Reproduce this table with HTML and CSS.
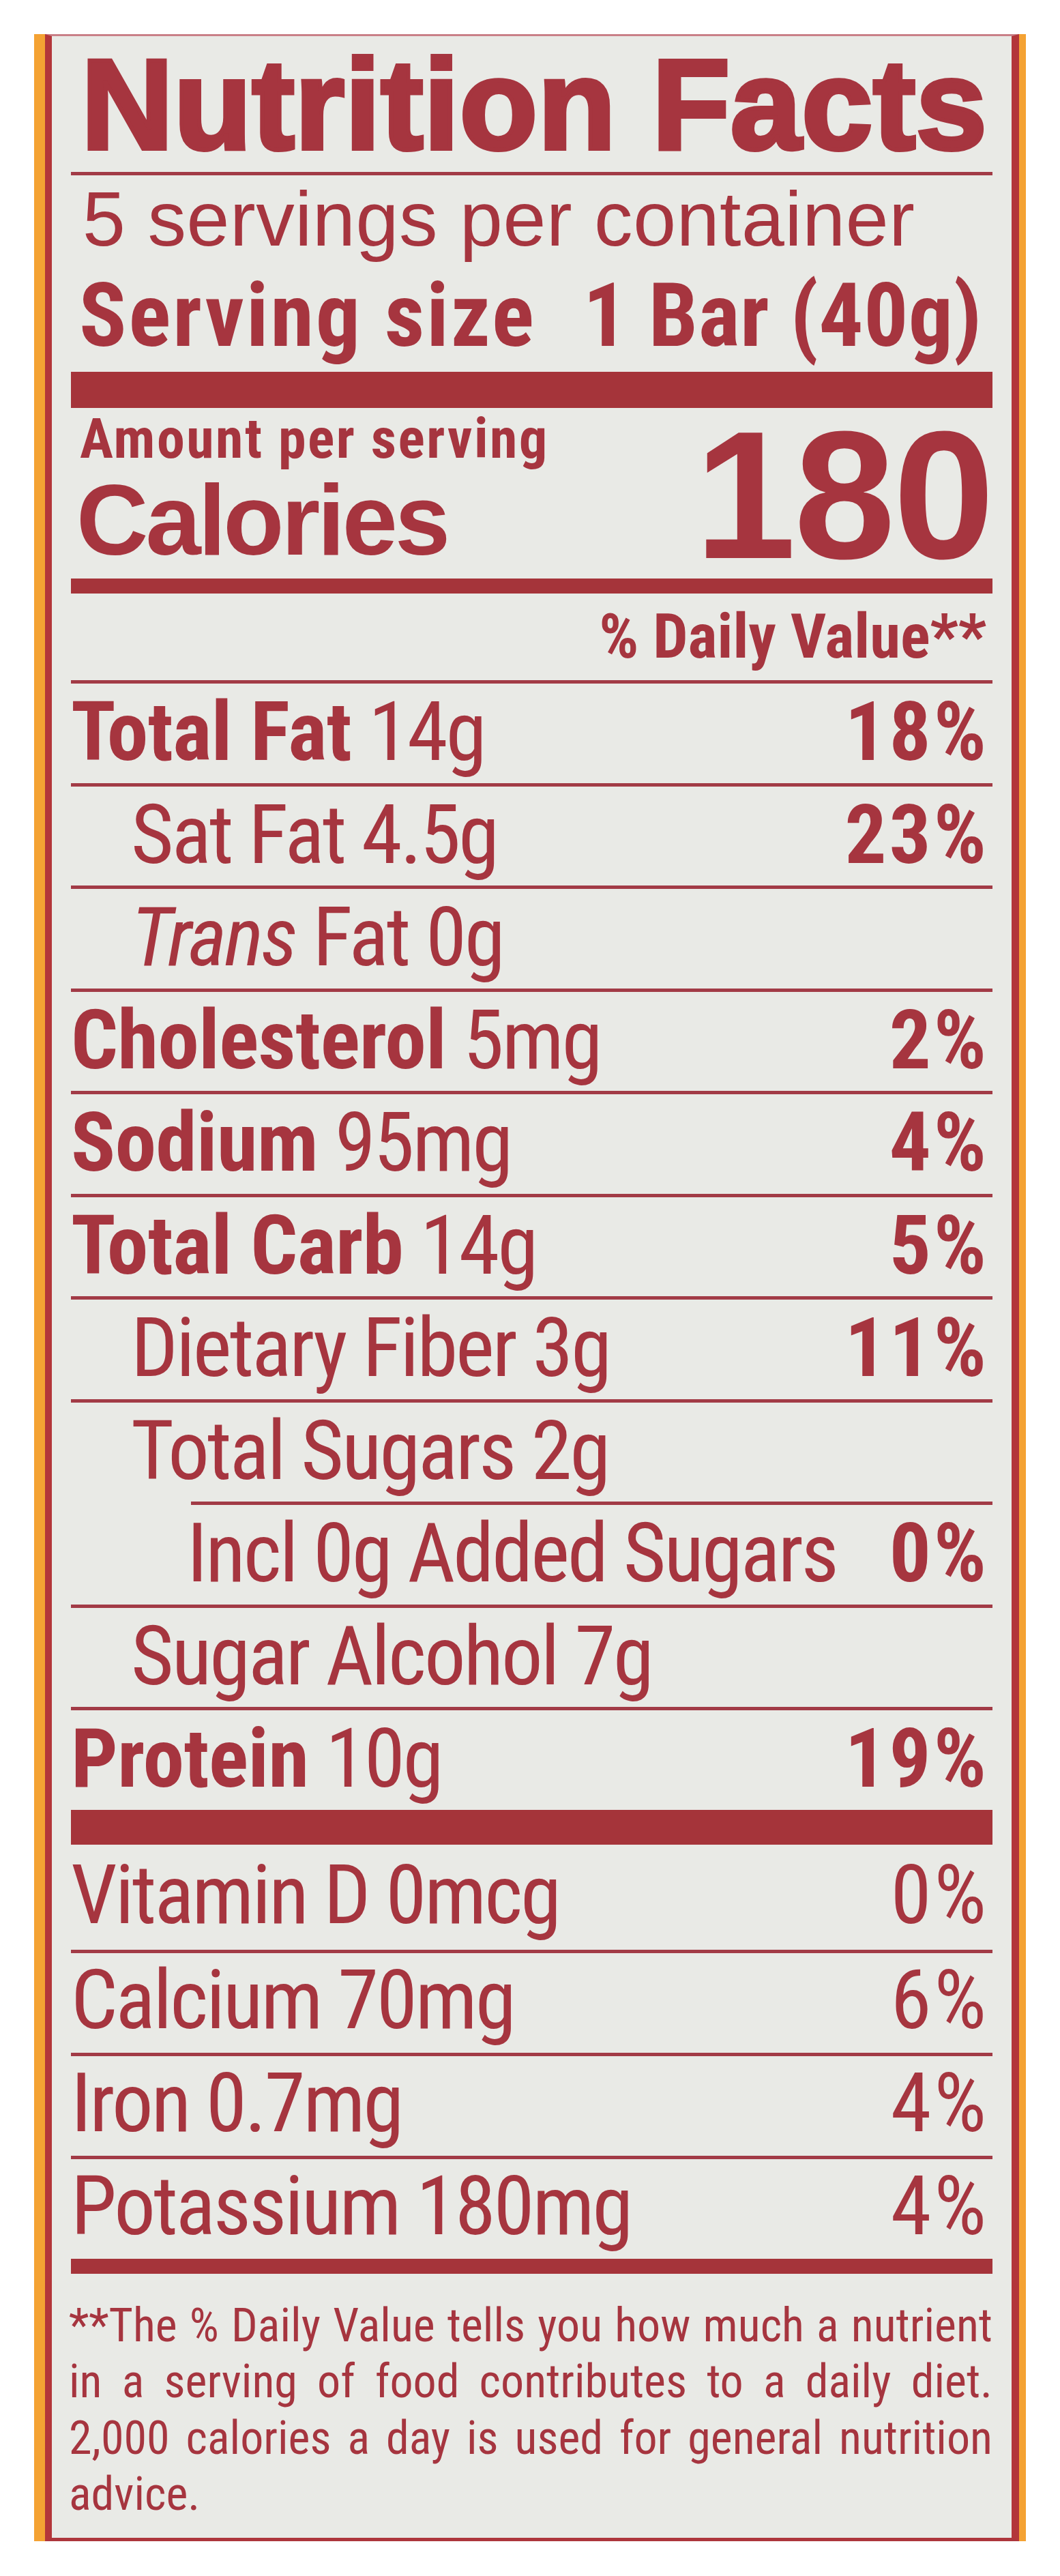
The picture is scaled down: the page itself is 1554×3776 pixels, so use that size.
FILE: index.html
```html
<!DOCTYPE html>
<html lang="en">
<head>
<meta charset="utf-8">
<title>Nutrition Facts</title>
<link rel="stylesheet" href="styles.css">
</head>
<body>
<div class="frame">
  <section class="label">
    <h1 class="title">Nutrition Facts</h1>
    <div class="rule"></div>
    <p class="servings">5 servings per container</p>
    <p class="size"><span class="size-label">Serving size</span><span class="size-value">1 Bar (40g)</span></p>
    <div class="bar bar-thick"></div>
    <div class="calories">
      <div class="cal-text">
        <div class="amount">Amount per serving</div>
        <div class="cal-label">Calories</div>
      </div>
      <div class="cal-value">180</div>
    </div>
    <div class="bar bar-medium"></div>
    <div class="dv-head">% Daily Value**</div>
    <div class="rule"></div>
    <div class="row"><span class="name"><b>Total Fat</b> 14g</span><b class="pct">18%</b></div>
    <div class="rule"></div>
    <div class="row sub"><span class="name">Sat Fat 4.5g</span><b class="pct">23%</b></div>
    <div class="rule"></div>
    <div class="row sub"><span class="name"><i>Trans</i> Fat 0g</span></div>
    <div class="rule"></div>
    <div class="row"><span class="name"><b>Cholesterol</b> 5mg</span><b class="pct">2%</b></div>
    <div class="rule"></div>
    <div class="row"><span class="name"><b>Sodium</b> 95mg</span><b class="pct">4%</b></div>
    <div class="rule"></div>
    <div class="row"><span class="name"><b>Total Carb</b> 14g</span><b class="pct">5%</b></div>
    <div class="rule"></div>
    <div class="row sub"><span class="name">Dietary Fiber 3g</span><b class="pct">11%</b></div>
    <div class="rule"></div>
    <div class="row sub"><span class="name">Total Sugars 2g</span></div>
    <div class="rule rule-sub2"></div>
    <div class="row sub2"><span class="name">Incl 0g Added Sugars</span><b class="pct">0%</b></div>
    <div class="rule"></div>
    <div class="row sub"><span class="name">Sugar Alcohol 7g</span></div>
    <div class="rule"></div>
    <div class="row"><span class="name"><b>Protein</b> 10g</span><b class="pct">19%</b></div>
    <div class="bar bar-thick2"></div>
    <div class="row vit vit-first"><span class="name">Vitamin D 0mcg</span><span class="pct">0%</span></div>
    <div class="rule"></div>
    <div class="row vit"><span class="name">Calcium 70mg</span><span class="pct">6%</span></div>
    <div class="rule"></div>
    <div class="row vit"><span class="name">Iron 0.7mg</span><span class="pct">4%</span></div>
    <div class="rule"></div>
    <div class="row vit"><span class="name">Potassium 180mg</span><span class="pct">4%</span></div>
    <div class="bar bar-medium"></div>
    <div class="footnote">
      <div class="fn-line">**The % Daily Value tells you how much a nutrient</div>
      <div class="fn-line">in a serving of food contributes to a daily diet.</div>
      <div class="fn-line">2,000 calories a day is used for general nutrition</div>
      <div class="fn-line fn-last">advice.</div>
    </div>
  </section>
</div>
</body>
</html>
```

FILE: styles.css
```css
* {
  box-sizing: border-box;
  margin: 0;
  padding: 0;
}

html,
body {
  background: #ffffff;
}

body {
  margin: 0;
  font-family: "Roboto Condensed", "Liberation Sans", sans-serif;
  color: #a6353f;
}

.frame {
  margin: 50px 0 0 50px;
  width: 1454px;
  padding: 0 10px 0 16px;
  background: #f4a233;
}

.label {
  background: #e9eae6;
  border-left: 10px solid #b3363a;
  border-right: 11px solid #b3363a;
  border-top: 3px solid #c98087;
  border-bottom: 5px solid #ad363c;
  padding: 0 28px 22px 28px;
}

.title {
  font-family: "Liberation Sans", Arial, sans-serif;
  font-weight: 700;
  font-size: 187px;
  line-height: 196px;
  padding: 3px 0 0 15px;
  letter-spacing: 0.6px;
  -webkit-text-stroke: 6px #a6353f;
  white-space: nowrap;
}

.rule {
  height: 5px;
  background: #a23b46;
}

.rule-sub2 {
  margin-left: 176px;
}

.bar {
  background: #a5343a;
}

.bar-thick {
  height: 53px;
}

.bar-thick2 {
  height: 51px;
}

.bar-medium {
  height: 22px;
}

.servings {
  font-family: "Liberation Sans", Arial, sans-serif;
  font-size: 113px;
  line-height: 128px;
  padding-left: 17px;
  letter-spacing: 0.6px;
  white-space: nowrap;
}

.size {
  font-weight: 700;
  font-size: 129px;
  line-height: 155px;
  padding: 0 0 5px 12px;
  white-space: nowrap;
}

.size-label {
  letter-spacing: 3px;
  margin-right: 69px;
}

.size-value {
  letter-spacing: 0.5px;
}

.calories {
  display: flex;
  justify-content: space-between;
  align-items: flex-end;
  height: 250px;
}

.cal-text {
  align-self: flex-start;
  display: flex;
  flex-direction: column;
}

.amount {
  font-weight: 700;
  font-size: 82px;
  line-height: 91px;
  padding-left: 13px;
  letter-spacing: 2.5px;
  white-space: nowrap;
}

.cal-label {
  font-family: "Liberation Sans", Arial, sans-serif;
  font-weight: 700;
  font-size: 146px;
  line-height: 147px;
  letter-spacing: -4px;
  padding-left: 8px;
}

.cal-value {
  font-family: "Liberation Sans", Arial, sans-serif;
  font-weight: 700;
  font-size: 267px;
  line-height: 245px;
  letter-spacing: -3px;
}

.dv-head {
  text-align: right;
  font-weight: 700;
  font-size: 91px;
  line-height: 127px;
  padding-right: 9px;
}

.row {
  display: flex;
  justify-content: space-between;
  font-size: 121px;
  line-height: 142.5px;
  height: 145.5px;
  padding-bottom: 3px;
  padding-right: 5px;
  white-space: nowrap;
}

.row .name {
  letter-spacing: -3px;
}

.row .name b {
  font-weight: 700;
  letter-spacing: -0.5px;
}

.row i {
  font-style: italic;
}

.row .pct {
  letter-spacing: 4px;
}

.row b.pct {
  font-weight: 700;
}

.row.sub {
  padding-left: 88px;
}

.row.sub2 {
  padding-left: 170px;
}

.row.vit {
  line-height: 138px;
  height: 146px;
  padding-bottom: 8px;
}

.row.vit-first {
  line-height: 149px;
  height: 154px;
  padding-bottom: 5px;
}

.footnote {
  padding-top: 35px;
  margin-left: -3px;
  font-size: 68px;
  line-height: 82.5px;
}

.fn-line {
  text-align: justify;
  text-align-last: justify;
  white-space: nowrap;
}

.fn-line.fn-last {
  text-align-last: left;
}
```
